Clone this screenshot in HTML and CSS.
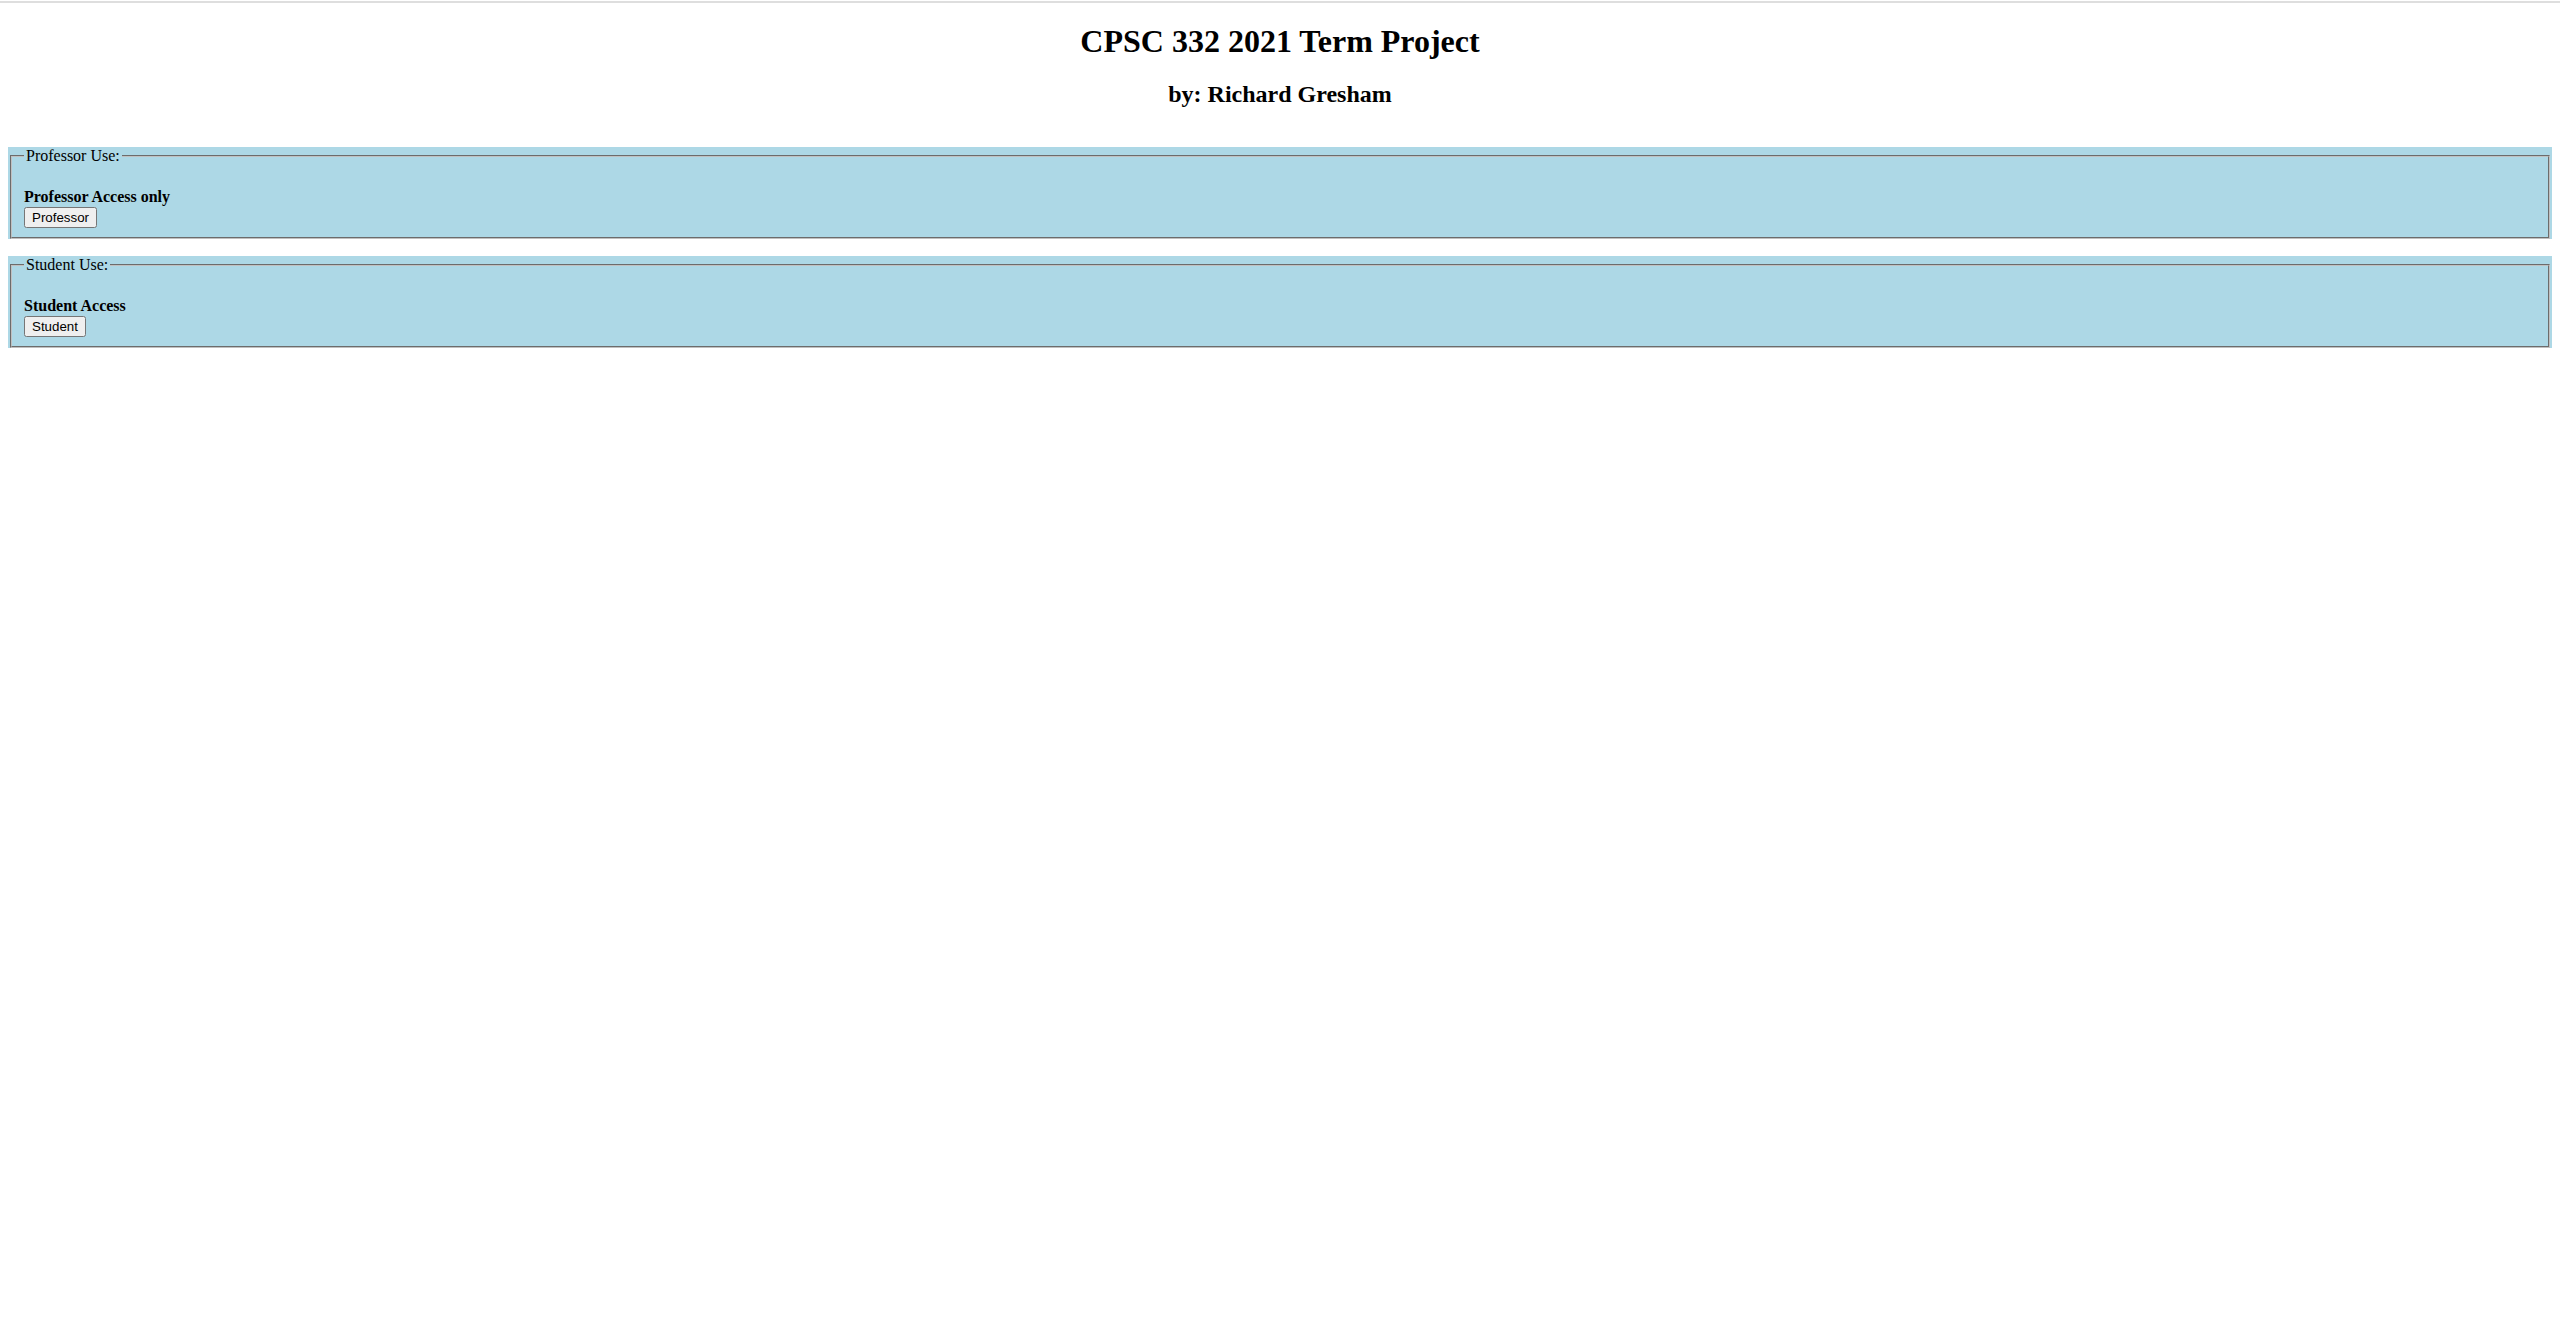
FILE: index.html
```html
<!DOCTYPE html>
<html lang="en">
<head>
<meta charset="utf-8">
<title>CPSC 332 2021 Term Project</title>
<link rel="stylesheet" href="styles.css">
</head>
<body>
<h1 class="title">CPSC 332 2021 Term Project</h1>
<h2 class="subtitle">by: Richard Gresham</h2>

<div class="panel">
  <fieldset class="box">
    <legend class="box-legend">Professor Use:</legend>
    <div class="access">
      <b class="access-label">Professor Access only</b>
      <button class="access-btn" type="button">Professor</button>
    </div>
  </fieldset>
</div>

<div class="panel">
  <fieldset class="box">
    <legend class="box-legend">Student Use:</legend>
    <div class="access">
      <b class="access-label">Student Access</b>
      <button class="access-btn" type="button">Student</button>
    </div>
  </fieldset>
</div>
</body>
</html>
```

FILE: styles.css
```css
html {
  background: #ffffff linear-gradient(to bottom, #ffffff 0, #ffffff 1px, #dedede 1px, #dedede 3px, #ffffff 3px) no-repeat top left / 100% 4px;
}

body {
  margin: 0 8px 8px;
  font-family: "Liberation Serif", "Times New Roman", serif;
  font-size: 16px;
  color: #000;
}

.title {
  font-size: 32px;
  font-weight: bold;
  text-align: center;
  margin: 23px 0 21.44px;
}

.subtitle {
  font-size: 24px;
  font-weight: bold;
  text-align: center;
  margin: 19.92px 0 38.3px;
}

.panel {
  background: #add8e6;
  margin-bottom: 16.5px;
}

.box {
  margin: 0 2px;
  padding: 5.6px 12px 9.5px;
  border: 2px groove rgb(192, 192, 192);
}

.box-legend {
  padding: 0 2px;
}

.access {
  display: flex;
  flex-direction: column;
  align-items: flex-start;
  padding-top: 18px;
}

.access-label {
  line-height: 18.4px;
}

.access-btn {
  font-family: "Liberation Sans", Arial, sans-serif;
  font-size: 13.333px;
  padding: 1px 6px;
  min-height: 21px;
}
```
